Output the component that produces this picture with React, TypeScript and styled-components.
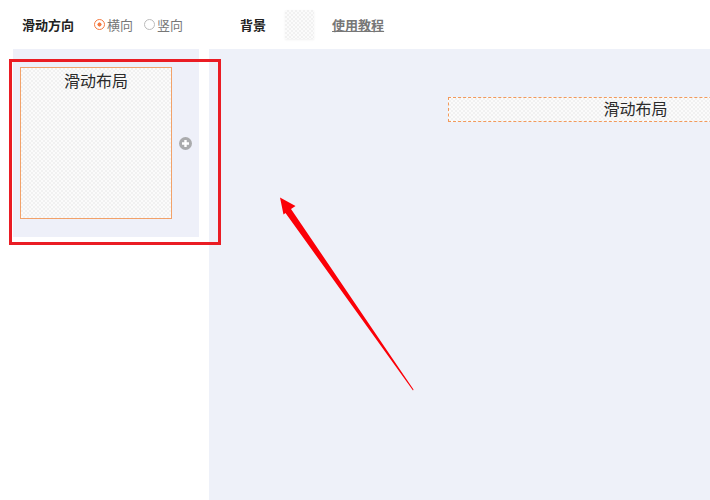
import React from "react";
import styled, { createGlobalStyle } from "styled-components";

const checker = `
  background-color: #fbfbfb;
  background-image: conic-gradient(#f1f1f1 25%, transparent 0 50%, #f1f1f1 0 75%, transparent 0);
  background-size: 4px 4px;
`;

const GlobalStyle = createGlobalStyle`
  html, body {
    margin: 0;
    padding: 0;
    background: #fff;
  }
  body {
    font-family: "Liberation Sans", "Noto Sans CJK SC", sans-serif;
  }
`;

function App() {
  return (
    <>
      <GlobalStyle />
      <Page>
        <Toolbar>
          <Label>滑动方向</Label>
          <RadioGroup>
            <Radio>
              <RadioDot checked />
              横向
            </Radio>
            <Radio>
              <RadioDot />
              竖向
            </Radio>
          </RadioGroup>
          <BackgroundLabel>背景</BackgroundLabel>
          <Swatch />
          <HelpLink>使用教程</HelpLink>
        </Toolbar>
        <Body>
          <Sidebar>
            <SlidePanel>
              <SlideThumb>滑动布局</SlideThumb>
              <AddButton>
                <svg width="13" height="13" viewBox="0 0 13 13">
                  <circle cx="6.5" cy="6.5" r="6.5" fill="#aaabad" />
                  <path d="M6.5 3v7M3 6.5h7" stroke="#fff" strokeWidth="2.4" />
                </svg>
              </AddButton>
            </SlidePanel>
          </Sidebar>
          <Canvas>
            <ScrollStrip>滑动布局</ScrollStrip>
          </Canvas>
        </Body>
        <Highlight />
        <Arrow width="710" height="500" viewBox="0 0 710 500">
          <polygon points="280,197.5 295.5,206 291,209 413.5,389.5 413,390.5 285.5,213 283.5,214.5" fill="#fb0007" />
        </Arrow>
      </Page>
    </>
  );
}

const Page = styled.div`
  position: relative;
  display: flex;
  flex-direction: column;
  width: 710px;
  height: 500px;
  overflow: hidden;
`;

const Toolbar = styled.div`
  display: flex;
  align-items: center;
  flex: 0 0 49px;
  padding-left: 22px;
  box-sizing: border-box;
  background: #fff;
`;

const Label = styled.span`
  font-size: 13px;
  font-weight: 700;
  color: #222;
`;

const RadioGroup = styled.div`
  display: flex;
  gap: 11px;
  margin-left: 20px;
`;

const Radio = styled.label`
  display: flex;
  align-items: center;
  gap: 2px;
  font-size: 13px;
  color: #777;
`;

const RadioDot = styled.span<{ checked?: boolean }>`
  width: 11px;
  height: 11px;
  box-sizing: border-box;
  border-radius: 50%;
  border: ${(props) => (props.checked ? "1.5px solid #f5793f" : "1.5px solid #bbb")};
  background: ${(props) => (props.checked ? "radial-gradient(circle, #f5793f 0 1.8px, #fff 2.3px)" : "#fff")};
`;

const BackgroundLabel = styled(Label)`
  margin-left: 57px;
`;

const Swatch = styled.div`
  ${checker}
  width: 29px;
  height: 29px;
  margin-left: 19px;
  box-shadow: 0 1px 2px rgb(0 0 0 / 6%);
`;

const HelpLink = styled.a`
  margin-left: 18px;
  font-size: 13px;
  font-weight: 700;
  color: #777;
  text-decoration: underline;
`;

const Body = styled.div`
  display: flex;
  flex: 1;
  min-height: 0;
`;

const Sidebar = styled.div`
  flex: 0 0 209px;
  padding-left: 13px;
  box-sizing: border-box;
  background: #fff;
`;

const SlidePanel = styled.div`
  display: flex;
  align-items: center;
  width: 186px;
  height: 188px;
  padding: 0 0 0 7px;
  box-sizing: border-box;
  background: #eef0f9;
`;

const SlideThumb = styled.div`
  ${checker}
  width: 152px;
  height: 152px;
  box-sizing: border-box;
  border: 1px solid #f2a26a;
  padding-top: 2px;
  text-align: center;
  font-size: 16px;
  line-height: 24px;
  color: #2b2b2b;
`;

const AddButton = styled.div`
  display: flex;
  margin-left: 7px;
`;

const Canvas = styled.div`
  flex: 1;
  min-width: 0;
  padding: 48px 0 0 239px;
  overflow: hidden;
  background: #eef1f9;
`;

const ScrollStrip = styled.div`
  ${checker}
  width: 375px;
  height: 25px;
  box-sizing: border-box;
  border: 1px dashed #f29a5c;
  text-align: center;
  font-size: 16px;
  line-height: 23px;
  color: #2b2b2b;
`;

const Highlight = styled.div`
  position: absolute;
  left: 9px;
  top: 59px;
  width: 212px;
  height: 186px;
  box-sizing: border-box;
  border: 3px solid #ea1c24;
`;

const Arrow = styled.svg`
  position: absolute;
  left: 0;
  top: 0;
  pointer-events: none;
`;

export default App;
